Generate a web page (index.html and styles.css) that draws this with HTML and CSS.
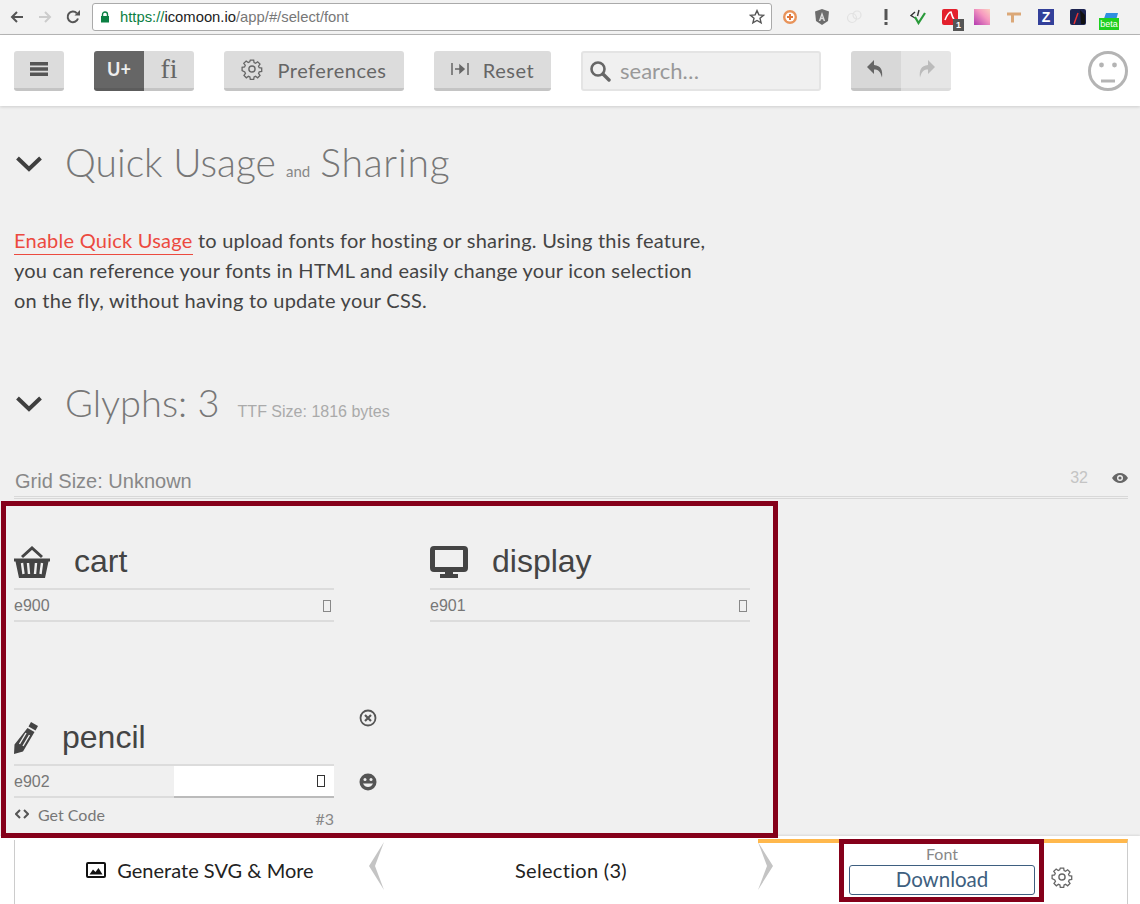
FILE: index.html
```html
<!DOCTYPE html>
<html lang="en">
<head>
	<meta charset="UTF-8">
	<title>IcoMoon App</title>
	<link rel="stylesheet" href="styles.css">
</head>
<body>
	<div class="chrome">
		<svg class="nav" width="16" height="16" viewBox="0 0 16 16"><path d="M14 8H3M8 3L3 8l5 5" fill="none" stroke="#555" stroke-width="2"/></svg>
		<svg class="nav" width="16" height="16" viewBox="0 0 16 16"><path d="M2 8h11M8 3l5 5-5 5" fill="none" stroke="#ccc" stroke-width="2"/></svg>
		<svg class="nav" width="16" height="16" viewBox="0 0 16 16"><path d="M13 9.500A5.300 5.300 0 1 1 11.800 4.200" fill="none" stroke="#555" stroke-width="2"/><path d="M9.500 6.500H15V1z" fill="#555"/></svg>
		<div class="url">
			<svg width="10" height="12" viewBox="0 0 10 12"><path d="M2.500 5V3.500a2.500 2.500 0 0 1 5 0V5" fill="none" stroke="#0b8043" stroke-width="1.400"/><rect x="1" y="5" width="8" height="6.500" fill="#0b8043"/></svg>
			<span class="url-text"><span class="url-scheme">https://</span><span class="url-host">icomoon.io</span>/app/#/select/font</span>
			<svg class="star" width="16" height="16" viewBox="0 0 16 16"><path d="M8 1.600l1.900 4.300 4.600.4-3.500 3 1.100 4.600L8 11.500l-4.100 2.400L5 9.300l-3.500-3 4.600-.4z" fill="none" stroke="#555" stroke-width="1.400"/></svg>
		</div>
		<div class="exts">
			<svg width="16" height="16" viewBox="0 0 16 16"><circle cx="8" cy="8" r="7" fill="#e8935a"/><circle cx="8" cy="8" r="4.600" fill="#fff"/><path d="M8 5v6M5 8h6" stroke="#e0763a" stroke-width="2"/></svg>
			<svg width="16" height="16" viewBox="0 0 16 16"><path d="M8 0l7 2.500-1 9.500-6 4-6-4-1-9.500z" fill="#6d6d6d"/><path d="M8 3L4.800 12h1.600l.6-1.800h2l.6 1.800h1.600zM7.400 8.800L8 7l.6 1.800z" fill="#ddd"/></svg>
			<svg width="16" height="16" viewBox="0 0 16 16"><circle cx="6" cy="9" r="4.500" fill="none" stroke="#e2e2e2" stroke-width="1.200"/><circle cx="11" cy="6" r="4" fill="none" stroke="#e2e2e2" stroke-width="1.200"/></svg>
			<svg width="16" height="16" viewBox="0 0 16 16"><path d="M6.500 0h3v11h-3z" fill="#555"/><rect x="6.500" y="13" width="3" height="3" fill="#555"/></svg>
			<svg width="16" height="16" viewBox="0 0 16 16"><path d="M5 3L1 6.500 5 9M9 1L7.500 7" fill="none" stroke="#333" stroke-width="1.400"/><path d="M5 8l3.500 6L15 4" fill="none" stroke="#2a9a3a" stroke-width="2.200"/></svg>
			<span class="ext-red"><svg width="16" height="16" viewBox="0 0 16 16"><rect width="16" height="16" rx="2" fill="#e3202c"/><path d="M3 11C5 6 7 3 9 3c1 3 1 5 3 7" fill="none" stroke="#fff" stroke-width="1.600"/></svg><span class="ext-count">1</span></span>
			<span class="ext-gradient"></span>
			<svg width="16" height="16" viewBox="0 0 16 16"><path d="M1 3.500h14v3H8v7H5v-7H1z" fill="#dba878"/></svg>
			<span class="ext-z">Z</span>
			<svg width="16" height="16" viewBox="0 0 16 16"><rect width="16" height="16" rx="2" fill="#1c2350"/><path d="M4 15L8 4" stroke="#e33" stroke-width="1.400"/><path d="M10 1l5 5v9h-4z" fill="#111"/></svg>
			<span class="ext-beta"><svg width="16" height="12" viewBox="0 0 16 12"><path d="M4 0h12l-3 11H0z" fill="#2f8fe0"/></svg><span class="ext-beta-label">beta</span></span>
		</div>
	</div>

	<div class="toolbar">
		<button class="btn btn-icon"><svg width="18" height="14" viewBox="0 0 18 14"><path d="M0 0h18v3.500H0zM0 5.200h18v3.500H0zM0 10.500h18V14H0z" fill="#555"/></svg></button>
		<div class="btn-group">
			<button class="btn btn-half btn-on">U+</button>
			<button class="btn btn-half btn-serif">fi</button>
		</div>
		<button class="btn btn-prefs">
			<svg class="gear" width="22" height="22" viewBox="0 0 20 20"><use href="#gear"/></svg>
			<span>Preferences</span>
		</button>
		<button class="btn btn-reset">
			<svg width="18" height="12" viewBox="0 0 18 12"><path d="M1 0v12M17 0v12" stroke="#666" stroke-width="1.500"/><path d="M4 6h7M9 2.500L13 6l-4 3.500z" fill="#666" stroke="#666" stroke-width="1.500"/></svg>
			<span>Reset</span>
		</button>
		<div class="search">
			<svg width="22" height="22" viewBox="0 0 22 22"><circle cx="9" cy="9" r="6.500" fill="none" stroke="#666" stroke-width="2.600"/><path d="M14 14l6 6" stroke="#666" stroke-width="3.400" stroke-linecap="round"/></svg>
			<span>search…</span>
		</div>
		<div class="btn-group">
			<button class="btn btn-half btn-undo"><svg width="20" height="20" viewBox="0 0 20 20"><path d="M8 1L1 8l7 7v-4.500c4 0 6 1 8 8 1-7-1-12-8-12.500z" fill="#666"/></svg></button>
			<button class="btn btn-half btn-redo"><svg width="20" height="20" viewBox="0 0 20 20"><path d="M12 1l7 7-7 7v-4.500c-4 0-6 1-8 8-1-7 1-12 8-12.500z" fill="#bbb"/></svg></button>
		</div>
		<svg class="face" width="40" height="40" viewBox="0 0 40 40"><circle cx="20" cy="20" r="18.500" fill="none" stroke="#b4b4b4" stroke-width="3"/><circle cx="13.500" cy="14" r="2.400" fill="#b4b4b4"/><circle cx="26.500" cy="14" r="2.400" fill="#b4b4b4"/><path d="M13 30h14" stroke="#b4b4b4" stroke-width="3"/></svg>
	</div>

	<div class="main">
		<h2 class="section-head head-usage">
			<svg class="caret" width="28" height="18" viewBox="0 0 28 18"><path d="M2.500 3L14 14 25.500 3" fill="none" stroke="#3f3f3f" stroke-width="4"/></svg>
			<span class="head-text">Quick Usage</span><small class="head-and">and</small><span class="head-text head-wide">Sharing</span>
		</h2>
		<p class="intro"><a class="link">Enable Quick Usage</a> to upload fonts for hosting or sharing. Using this feature,<br>you can reference your fonts in HTML and easily change your icon selection<br>on the fly, without having to update your CSS.</p>
		<h2 class="section-head head-glyphs">
			<svg class="caret" width="28" height="18" viewBox="0 0 28 18"><path d="M2.500 3L14 14 25.500 3" fill="none" stroke="#3f3f3f" stroke-width="4"/></svg>
			<span class="head-text">Glyphs: 3</span><small class="head-size">TTF Size: 1816 bytes</small>
		</h2>
		<div class="grid-bar">
			<span class="grid-size">Grid Size: Unknown</span>
			<span class="grid-num">32</span>
			<svg class="grid-eye" width="16" height="12" viewBox="0 0 16 12"><path d="M0 6c2-3.500 5-5 8-5s6 1.500 8 5c-2 3.500-5 5-8 5S2 9.500 0 6z" fill="#666"/><circle cx="8" cy="6" r="3" fill="#f0f0f0"/><circle cx="8" cy="6" r="1.600" fill="#666"/></svg>
		</div>
		<div class="glyphs">
			<div class="glyph">
				<div class="glyph-title">
					<svg class="glyph-icon" width="36" height="32" viewBox="0 0 36 32"><path d="M8 11l10-9 10 9" fill="none" stroke="#444" stroke-width="3"/><path d="M0 12.500h36v3h-1.500L31 32H5L1.500 15.500H0z" fill="#444"/><path d="M8 17l1.500 11M14 17l1 11M22 17l-1 11M28 17l-1.500 11" stroke="#f0f0f0" stroke-width="2.400"/></svg>
					<span class="glyph-name">cart</span>
				</div>
				<div class="glyph-code"><span>e900</span><i class="tofu"></i></div>
			</div>
			<div class="glyph">
				<div class="glyph-title">
					<svg class="glyph-icon" width="38" height="32" viewBox="0 0 38 32"><path d="M4 0h30a4 4 0 0 1 4 4v18a4 4 0 0 1-4 4H23v2h5v4H10v-4h5v-2H4a4 4 0 0 1-4-4V4a4 4 0 0 1 4-4zm1 4v17h28V4z" fill="#444" fill-rule="evenodd"/></svg>
					<span class="glyph-name">display</span>
				</div>
				<div class="glyph-code"><span>e901</span><i class="tofu"></i></div>
			</div>
			<div class="glyph glyph-active">
				<div class="glyph-title">
					<svg class="glyph-icon" width="24" height="32" viewBox="0 0 24 32"><path d="M17 0l7 4-2.500 4.500-7-4zM13.500 6l7 4L9 29.500 0 32l.5-9.500z" fill="#444"/><path d="M12 11L5.500 22M15.500 13L9 24" stroke="#f0f0f0" stroke-width="1.400"/></svg>
					<span class="glyph-name">pencil</span>
				</div>
				<div class="glyph-code"><span>e902</span><div class="code-input"><i class="tofu tofu-dark"></i></div></div>
				<div class="glyph-foot">
					<span class="get-code"><svg width="14" height="10" viewBox="0 0 14 10"><path d="M5 1L1 5l4 4M9 1l4 4-4 4" fill="none" stroke="#555" stroke-width="2"/></svg>Get Code</span>
					<span class="glyph-num">#3</span>
				</div>
				<div class="glyph-tools">
					<svg width="18" height="18" viewBox="0 0 18 18"><circle cx="9" cy="9" r="7.500" fill="none" stroke="#555" stroke-width="1.800"/><path d="M6 6l6 6M12 6l-6 6" stroke="#555" stroke-width="2.200"/></svg>
					<svg width="18" height="18" viewBox="0 0 18 18"><circle cx="9" cy="9" r="8.500" fill="#555"/><circle cx="6" cy="6.500" r="1.500" fill="#f0f0f0"/><circle cx="12" cy="6.500" r="1.500" fill="#f0f0f0"/><path d="M4 10.500c1 2.500 3 3.500 5 3.500s4-1 5-3.500z" fill="#f0f0f0"/></svg>
				</div>
			</div>
		</div>
	</div>

	<div class="footer">
		<div class="foot-left">
			<svg width="20" height="16" viewBox="0 0 20 16"><path d="M2 0h16a2 2 0 0 1 2 2v12a2 2 0 0 1-2 2H2a2 2 0 0 1-2-2V2a2 2 0 0 1 2-2zm0 2v12h16V2z" fill="#111" fill-rule="evenodd"/><path d="M3.500 12.500l3.500-5 2.500 2.500 3-4 4 6.500z" fill="#111"/></svg>
			<span>Generate SVG &amp; More</span>
		</div>
		<svg class="chev" width="16" height="48" viewBox="0 0 16 48"><path d="M15 0L0 24l15 24L6 24z" fill="#c4c4c4"/></svg>
		<div class="foot-mid">Selection (3)</div>
		<svg class="chev" width="16" height="48" viewBox="0 0 16 48"><path d="M1 0l15 24L1 48l9-24z" fill="#c4c4c4"/></svg>
		<div class="foot-right">
			<div class="font-box">
				<span class="font-label">Font</span>
				<button class="download">Download</button>
			</div>
			<svg class="gear" width="22" height="22" viewBox="0 0 20 20"><use href="#gear"/></svg>
		</div>
	</div>

	<div class="mark mark-glyphs"></div>
	<div class="mark mark-download"></div>

	<svg class="defs" width="0" height="0">
		<symbol id="gear" viewBox="0 0 20 20"><path d="M8.300 1h3.400l.4 2.500 1.500.7 2.100-1.500 2.400 2.400-1.500 2.100.7 1.500 2.500.4v3.400l-2.500.4-.7 1.500 1.500 2.100-2.400 2.400-2.100-1.500-1.500.7-.4 2.500H8.300l-.4-2.500-1.500-.7-2.100 1.500-2.400-2.400 1.500-2.100-.7-1.500L0 11.700V8.300l2.500-.4.700-1.500-1.500-2.100 2.400-2.400 2.100 1.500 1.500-.7z" transform="translate(1 1) scale(.9)" fill="none" stroke="#666" stroke-width="1.300"/><circle cx="10" cy="10" r="2.800" fill="none" stroke="#666" stroke-width="1.300"/></symbol>
	</svg>
</body>
</html>
```

FILE: styles.css
```css
html, body { margin: 0; padding: 0; height: 904px; overflow: hidden; background: #f0f0f0; font-family: "Lato", sans-serif; color: #444; }
body { position: relative; display: flex; flex-direction: column; }
button { font-family: inherit; border: 0; margin: 0; padding: 0; cursor: pointer; }
.defs { position: absolute; }

/* browser bar */
.chrome { height: 35px; flex: none; box-sizing: border-box; display: flex; align-items: center; padding: 0 0 0 9px; background: #f2f2f2; border-bottom: 1px solid #b8b8b8; gap: 12px; }
.url { width: 680px; height: 28px; box-sizing: border-box; margin-left: -1px; padding: 0 6px 0 7px; display: flex; align-items: center; gap: 10px; background: #fff; border: 1px solid #aaa; border-radius: 3px; font: 14.8px "Liberation Sans", sans-serif; color: #777; }
.url-text { flex: 1; }
.url-scheme { color: #0b8043; }
.url-host { color: #222; }
.exts { display: flex; align-items: center; gap: 16px; margin-left: -2px; }
.exts > * { flex: none; }
.ext-red, .ext-beta { position: relative; display: block; width: 16px; height: 16px; }
.ext-count { position: absolute; left: 11px; top: 10px; width: 11px; height: 12px; background: #555; color: #fff; font: bold 9px/12px "Liberation Sans", sans-serif; text-align: center; }
.ext-gradient { width: 16px; height: 16px; background: linear-gradient(45deg, #b33ab0, #f79ac0 60%, #fbd0c0); }
.ext-z { width: 16px; height: 16px; background: #33409a; color: #fff; font: bold 14px/16px "Liberation Sans", sans-serif; text-align: center; }
.ext-beta-label { position: absolute; left: -3px; top: 9px; width: 20px; height: 12px; background: #1fd01f; color: #fff; font: 9px/12px "Liberation Sans", sans-serif; text-align: center; }

/* app toolbar */
.toolbar { height: 71px; flex: none; box-sizing: border-box; display: flex; align-items: center; gap: 30px; padding: 0 12px 0 14px; background: #fff; box-shadow: 0 1px 3px rgba(0,0,0,.15); position: relative; }
.btn { height: 40px; box-sizing: border-box; display: flex; align-items: center; justify-content: center; gap: 14px; background: #dcdcdc; border-bottom: 3px solid #c4c4c4; border-radius: 3px; font-size: 20px; color: #666; }
.btn span { position: relative; top: 1px; letter-spacing: .5px; }
.btn-icon { width: 50px; }
.btn-group { display: flex; }
.btn-half { width: 50px; border-radius: 0; }
.btn-group .btn-half:first-child { border-radius: 3px 0 0 3px; }
.btn-group .btn-half:last-child { border-radius: 0 3px 3px 0; }
.btn-on { background: #666; border-bottom-color: #5c5c5c; color: #eee; font-weight: bold; font-size: 18px; }
.btn-serif { font: 28px "Liberation Serif", serif; color: #666; }
.btn-prefs { width: 180px; }
.btn-reset { width: 117px; }
.btn-undo { background: #d8d8d8; }
.btn-redo { background: #e6e6e6; border-bottom-color: #dcdcdc; }
.search { width: 240px; height: 40px; box-sizing: border-box; display: flex; align-items: center; gap: 9px; padding-left: 6px; background: #f0f0f0; border: 2px solid #e4e4e4; border-radius: 3px; font-size: 22px; color: #999; }
.face { margin-left: 107px; }

/* page */
.main { flex: 1; min-height: 0; padding: 0 12px 0 14px; }
.section-head { display: flex; align-items: center; margin: 0; font-weight: 300; color: #777; font-size: 39px; }
.caret { margin: 0 22px 0 1px; flex: none; }
.head-text { margin-bottom: 4px; }
.head-wide { letter-spacing: .8px; }
.head-usage { height: 50px; margin-top: 33px; }
.head-and { font-size: 15px; margin: 14px 10px 0; color: #888; font-weight: 400; }
.intro { margin: 36px 0 0; font-size: 20px; line-height: 30px; letter-spacing: .24px; color: #444; white-space: nowrap; }
.link { color: #ec4a3f; border-bottom: 1px solid #ec4a3f; padding-bottom: 2px; }
.head-glyphs { height: 50px; margin-top: 65px; font-size: 38px; }
.head-glyphs .head-text { margin-bottom: 6px; }
.head-glyphs .caret { margin-bottom: 2px; }
.head-size { font: 16px "Liberation Sans", sans-serif; color: #aaa; margin: 14px 0 0 18px; }
.grid-bar { display: flex; align-items: center; height: 30px; padding-top: 4px; margin-top: 32px; border-bottom: 3px double #d8d8d8; }
.grid-size { font: 20px "Liberation Sans", sans-serif; color: #888; margin-right: auto; padding-left: 1px; }
.grid-num { font: 16px "Liberation Sans", sans-serif; color: #c4c4c4; margin: 0 24px 6px 0; }
.grid-eye { margin-bottom: 6px; }

.glyphs { display: grid; grid-template-columns: 320px 320px; column-gap: 96px; grid-auto-rows: 176px; margin-top: 40px; }
.glyph { position: relative; }
.glyph-title { height: 51px; box-sizing: border-box; display: flex; align-items: center; gap: 24px; border-bottom: 2px solid #dcdcdc; padding-bottom: 4px; }
.glyph-icon { flex: none; }
.glyph-name { font: 32px "Liberation Sans", sans-serif; color: #444; }
.glyph-code { height: 32px; box-sizing: border-box; display: flex; align-items: center; justify-content: space-between; border-bottom: 2px solid #dcdcdc; font: 16px "Liberation Sans", sans-serif; color: #777; padding: 2px 3px 0 0; }
.tofu { display: block; width: 6px; height: 10px; border: 1px solid #888; }
.tofu-dark { border-color: #333; }
.code-input { width: 160px; height: 30px; margin: -2px -3px -2px 0; display: flex; align-items: center; justify-content: flex-end; background: #fff; border-bottom: 2px solid #bbb; }
.code-input .tofu { margin-right: 9px; }
.glyph-foot { display: flex; justify-content: space-between; font-size: 16px; color: #777; padding-top: 2px; }
.get-code { display: flex; align-items: center; gap: 9px; padding-left: 1px; }
.glyph-num { padding-top: 9px; color: #888; }
.glyph-tools { position: absolute; left: 345px; top: -6px; height: 82px; display: flex; flex-direction: column; justify-content: space-between; }

/* footer bar */
.footer { height: 68px; flex: none; box-sizing: border-box; display: flex; align-items: flex-start; padding: 0 12px 0 14px; background: #fff; box-shadow: 0 -1px 2px rgba(0,0,0,.1); position: relative; font-size: 20px; color: #222; }
.foot-left { width: 355px; height: 64px; margin-top: 4px; padding: 0 0 4px 16px; box-sizing: border-box; display: flex; align-items: center; justify-content: center; gap: 11px; border-left: 1px solid #ccc; }
.foot-mid { width: 372px; height: 60px; margin-top: 4px; display: flex; align-items: center; justify-content: center; letter-spacing: .3px; }
.chev { margin-top: 6px; flex: none; }
.foot-right { flex: 1; height: 65px; margin-top: 3px; margin-left: -15px; padding-left: 91px; box-sizing: border-box; display: flex; align-items: flex-start; gap: 16px; border-top: 4px solid #ffb84d; border-right: 1px solid #ccc; }
.font-box { width: 186px; display: flex; flex-direction: column; align-items: center; }
.font-label { font-size: 16px; line-height: 20px; color: #888; height: 22px; padding-top: 1px; margin-bottom: -1px; }
.download { width: 186px; height: 30px; padding-bottom: 2px; background: #fff; border: 1px solid #3e5f80; border-radius: 3px; font-size: 20.5px; color: #3e5f80; }
.foot-right .gear { margin-top: 23px; }

/* annotation frames laid over the page */
.mark { position: absolute; box-sizing: border-box; border: 5px solid #85001a; pointer-events: none; }
.mark-glyphs { left: 1px; top: 501px; width: 777px; height: 337px; }
.mark-download { left: 839px; top: 839px; width: 205px; height: 63px; }
```
